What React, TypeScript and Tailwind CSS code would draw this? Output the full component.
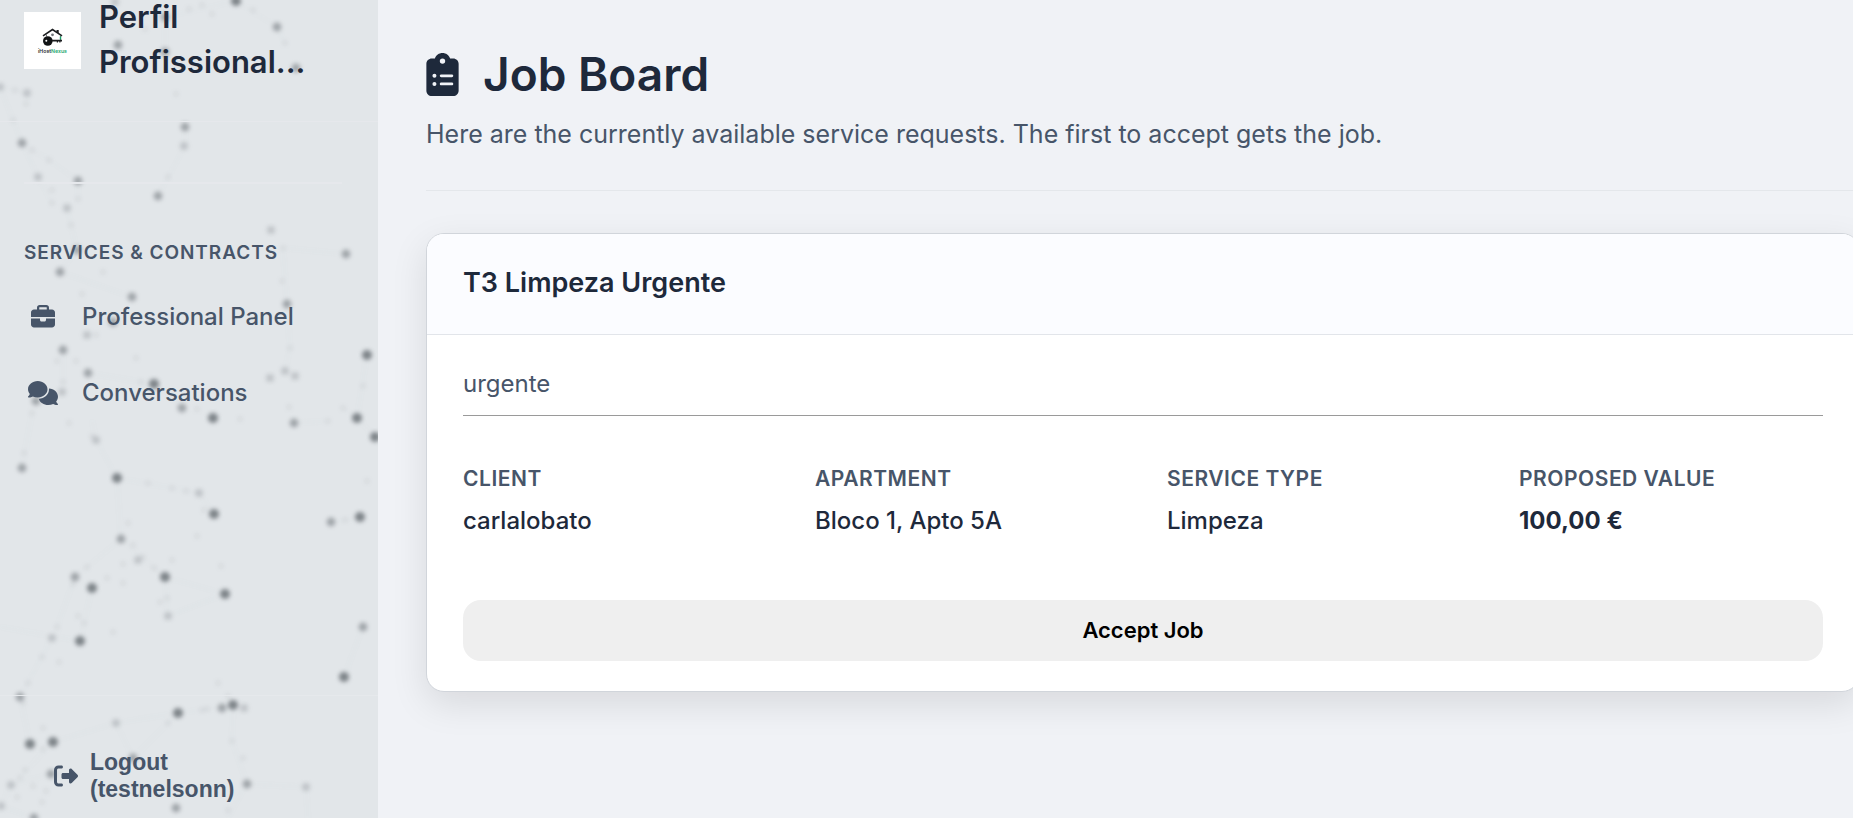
import React from "react";
import {
  FaBriefcase,
  FaClipboardList,
  FaComments,
  FaRightFromBracket,
} from "react-icons/fa6";

// Each entry is [x, y, level]; a higher level is a darker, larger dot.
const DOTS: [number, number, number][] = [
  [115, 2, 2], [236, 1, 4], [277, 27, 3], [285, 43, 1], [118, 45, 3], [165, 52, 3], [165, 17, 3], [296, 68, 3],
  [0, 87, 2], [27, 93, 2], [26, 104, 1], [15, 90, 1], [176, 94, 1], [185, 127, 3], [184, 146, 2], [22, 143, 3],
  [32, 150, 1], [49, 160, 1], [38, 177, 2], [78, 181, 3], [78, 199, 1], [67, 208, 2], [158, 196, 3], [168, 177, 1],
  [202, 5, 1], [212, 14, 1], [253, 10, 1], [52, 190, 1], [52, 203, 1], [13, 120, 1], [189, 9, 1], [145, 29, 1],
  [271, 230, 2], [346, 254, 3], [283, 248, 1], [282, 281, 1], [287, 304, 3], [77, 250, 3], [60, 272, 3], [103, 272, 1],
  [132, 297, 3], [82, 294, 1], [71, 225, 1], [113, 322, 3], [87, 335, 2], [96, 335, 1], [63, 350, 3], [57, 361, 1],
  [76, 361, 1], [63, 382, 1], [136, 358, 1], [88, 373, 3], [141, 382, 1], [154, 384, 4], [62, 392, 2], [36, 401, 3],
  [32, 413, 1], [182, 408, 3], [197, 409, 1], [213, 418, 4], [367, 355, 4], [285, 371, 2], [295, 376, 2], [270, 378, 2],
  [290, 348, 1], [363, 386, 1], [343, 408, 1], [357, 418, 4], [289, 407, 1], [294, 423, 3], [328, 421, 1], [240, 419, 1],
  [375, 437, 4], [96, 440, 2], [92, 436, 1], [69, 423, 1], [24, 453, 1], [22, 468, 3], [117, 478, 4], [148, 483, 1],
  [172, 488, 1], [186, 491, 1], [199, 493, 2], [214, 514, 4], [204, 510, 1], [367, 481, 1], [360, 517, 4], [331, 522, 3],
  [345, 520, 1], [128, 523, 1], [197, 536, 1], [121, 539, 3], [133, 545, 1], [138, 560, 2], [143, 557, 1], [123, 564, 1],
  [87, 567, 1], [172, 560, 1], [221, 566, 1], [154, 568, 1], [75, 577, 3], [73, 584, 1], [92, 588, 4], [107, 578, 1],
  [123, 583, 1], [165, 577, 4], [225, 594, 4], [168, 616, 2], [167, 598, 1], [160, 602, 1], [78, 616, 1], [84, 623, 1],
  [57, 627, 1], [363, 627, 3], [52, 638, 2], [80, 641, 4], [113, 632, 1], [42, 657, 1], [59, 662, 1], [28, 683, 1],
  [20, 697, 3], [23, 703, 1], [30, 744, 4], [53, 742, 4], [43, 728, 1], [43, 749, 1], [116, 723, 2], [178, 713, 4],
  [168, 723, 1], [202, 710, 1], [207, 709, 1], [222, 708, 3], [233, 705, 4], [244, 708, 2], [228, 696, 1], [218, 683, 1],
  [232, 741, 1], [243, 758, 1], [247, 784, 3], [306, 787, 2], [344, 677, 4], [133, 758, 3], [51, 774, 3], [11, 785, 2],
  [20, 778, 1], [17, 797, 1], [1, 806, 2], [25, 770, 1], [46, 791, 1], [42, 802, 1], [34, 818, 3], [176, 808, 3],
  [33, 786, 1], [228, 810, 1],
];

const LINKS =
  "M236 1L277 27L285 43M236 1L165 17V52M0 87L27 93L26 104M22 143L49 160L78 181V199M22 143L38 177L52 203M0 87L22 143M185 127V146L158 196M67 208L77 250L60 272M283 248L346 254M283 248L287 304L290 348L285 371M60 272L132 297M63 350V392M88 373L154 384L182 408M367 355L357 418L375 437M343 408L357 418M294 423L328 421M32 413L22 468M92 420L96 440L117 478L121 539M117 478L199 493L214 514M331 522L360 517M121 539L165 577L225 594L168 616L165 577M121 539L75 577L57 627M92 588L80 641M0 627L80 641M52 638L20 697L30 744M363 627L344 677M53 742L116 723L178 713L233 705L232 741L247 784L306 787L308 818M116 723L133 758L178 713M51 774L11 785L1 806L34 818M20 778L52 742M247 784L228 818";

const DOT_RADIUS = [0, 2.5, 4, 4.4, 5];
const DOT_OPACITY = [0, 0.1, 0.25, 0.5, 0.76];

function Constellation() {
  return (
    <svg
      aria-hidden="true"
      className="pointer-events-none absolute inset-0 h-full w-full"
    >
      <defs>
        <filter id="soft" x="-5%" y="-5%" width="110%" height="110%" colorInterpolationFilters="sRGB">
          <feGaussianBlur stdDeviation="2" />
        </filter>
      </defs>
      <g filter="url(#soft)">
        <path d={LINKS} fill="none" stroke="#6b7280" strokeWidth="1.5" opacity="0.03" />
        {DOTS.map(([x, y, level]) => (
          <circle
            key={`${x}-${y}`}
            cx={x}
            cy={y}
            r={DOT_RADIUS[level]}
            fill="#5f656b"
            opacity={DOT_OPACITY[level]}
          />
        ))}
      </g>
    </svg>
  );
}

function Logo() {
  return (
    <svg viewBox="0 0 57 57" className="size-[57px] shrink-0 bg-white" role="img" aria-label="iHostNexus">
      <path d="M19 23.8L28.5 17.5L38 23.8" fill="none" stroke="#1b1d1f" strokeWidth="1.6" />
      <path d="M32.5 18h2.2v3.4l-2.2-1.4z" fill="#1b1d1f" />
      <path d="M22.5 22.5v2M36.5 24v5" stroke="#4b5054" strokeWidth="0.8" />
      <path d="M36.5 24.5v3" stroke="#16a56b" strokeWidth="1.4" />
      <circle cx="28.5" cy="22.8" r="1.4" fill="#70757a" />
      <circle cx="23.8" cy="29" r="4.8" fill="#111315" />
      <circle cx="22.3" cy="28.8" r="1" fill="#fff" />
      <path d="M28 27.8h10v1.7h-1.5v1h-1.2v-1h-1.3v1h-1.2v-1H28z" fill="#1b1d1f" />
      <text
        x="14"
        y="40.5"
        fontFamily="Inter, sans-serif"
        fontSize="5.2"
        fontWeight="600"
        fill="#2b2f33"
      >
        iHost<tspan fill="#1fa971">Nexus</tspan>
      </text>
    </svg>
  );
}

function NavItem({ icon, label }: { icon: React.ReactNode; label: string }) {
  return (
    <li>
      <a href="#" className="flex h-[76px] items-center gap-5">
        <span className="flex w-[38px] justify-center text-2xl">{icon}</span>
        <span className="text-2xl font-medium">{label}</span>
      </a>
    </li>
  );
}

function Sidebar() {
  return (
    <aside className="relative flex w-[378px] shrink-0 flex-col overflow-hidden bg-[#e2e6e9] text-[#475569]">
      <Constellation />
      <div className="relative flex h-[122px] items-center gap-[18px] border-b border-[#e6e8ec] px-6 pb-10">
        <Logo />
        <p className="mb-1 text-[31px] leading-[45px] font-semibold text-[#1e293b]">
          Perfil Profissional...
        </p>
      </div>
      <nav className="relative grow pt-[60px]">
        <hr className="mr-9 ml-6 border-t-2 border-[#e6e8ec]" />
        <h2 className="mt-14 pl-6 text-[19px] leading-[26px] font-semibold tracking-wider">
          SERVICES &amp; CONTRACTS
        </h2>
        <ul className="mt-[13px] pl-6">
          <NavItem icon={<FaBriefcase />} label="Professional Panel" />
          <NavItem icon={<FaComments className="size-[30px]" />} label="Conversations" />
        </ul>
      </nav>
      <div className="relative border-t border-[#e6e9ec] pt-[53px] pb-[15px] pl-[54px]">
        <button
          type="button"
          className="flex items-center gap-3 text-left font-['Liberation_Sans',sans-serif] text-[23px] leading-[27px] font-bold"
        >
          <FaRightFromBracket className="size-6" />
          <span>
            Logout
            <br />
            (testnelsonn)
          </span>
        </button>
      </div>
    </aside>
  );
}

function Detail({ label, value, strong }: { label: string; value: string; strong?: boolean }) {
  return (
    <div>
      <dt className="text-[21px] leading-8 font-semibold tracking-wide text-[#475569]">{label}</dt>
      <dd className={strong ? "mt-2 text-2xl leading-9 font-bold" : "mt-2 text-2xl leading-9 font-medium"}>
        {value}
      </dd>
    </div>
  );
}

export default function App() {
  return (
    <div className="flex min-h-screen overflow-hidden bg-[#f0f2f6] font-[Inter,sans-serif] text-[#1e293b]">
      <Sidebar />
      <main className="-mr-[7px] grow pt-11 pl-12">
        <header className="border-b border-[#e4e7eb] pb-[37px]">
          <h1 className="flex items-center gap-6 text-[46px] leading-[60px] font-semibold">
            <FaClipboardList className="h-[43px] w-[33px]" />
            Job Board
          </h1>
          <p className="mt-[11px] text-[25px] leading-[38px] text-[#475569]">
            Here are the currently available service requests. The first to accept gets the job.
          </p>
        </header>
        <article className="mt-[42px] overflow-hidden rounded-[18px] border border-[#d1d5db] bg-white shadow-[0_12px_36px_rgba(0,0,0,0.1)]">
          <header className="border-b border-[#e2e5ea] bg-[#fbfcff] px-9 pt-[31px] pb-[33px]">
            <h2 className="text-[27px] leading-9 font-semibold">T3 Limpeza Urgente</h2>
          </header>
          <div className="px-9 pt-[31px] pb-[30px]">
            <p className="text-2xl leading-9 text-[#475569]">urgente</p>
            <hr className="mt-[13px] border-[#9a9a9a]" />
            <dl className="mt-[47px] grid grid-cols-4 gap-12">
              <Detail label="CLIENT" value="carlalobato" />
              <Detail label="APARTMENT" value="Bloco 1, Apto 5A" />
              <Detail label="SERVICE TYPE" value="Limpeza" />
              <Detail label="PROPOSED VALUE" value="100,00 €" strong />
            </dl>
            <button
              type="button"
              className="mt-[61px] h-[61px] w-full rounded-[18px] bg-[#efefef] text-[22px] font-semibold text-black"
            >
              Accept Job
            </button>
          </div>
        </article>
      </main>
    </div>
  );
}
